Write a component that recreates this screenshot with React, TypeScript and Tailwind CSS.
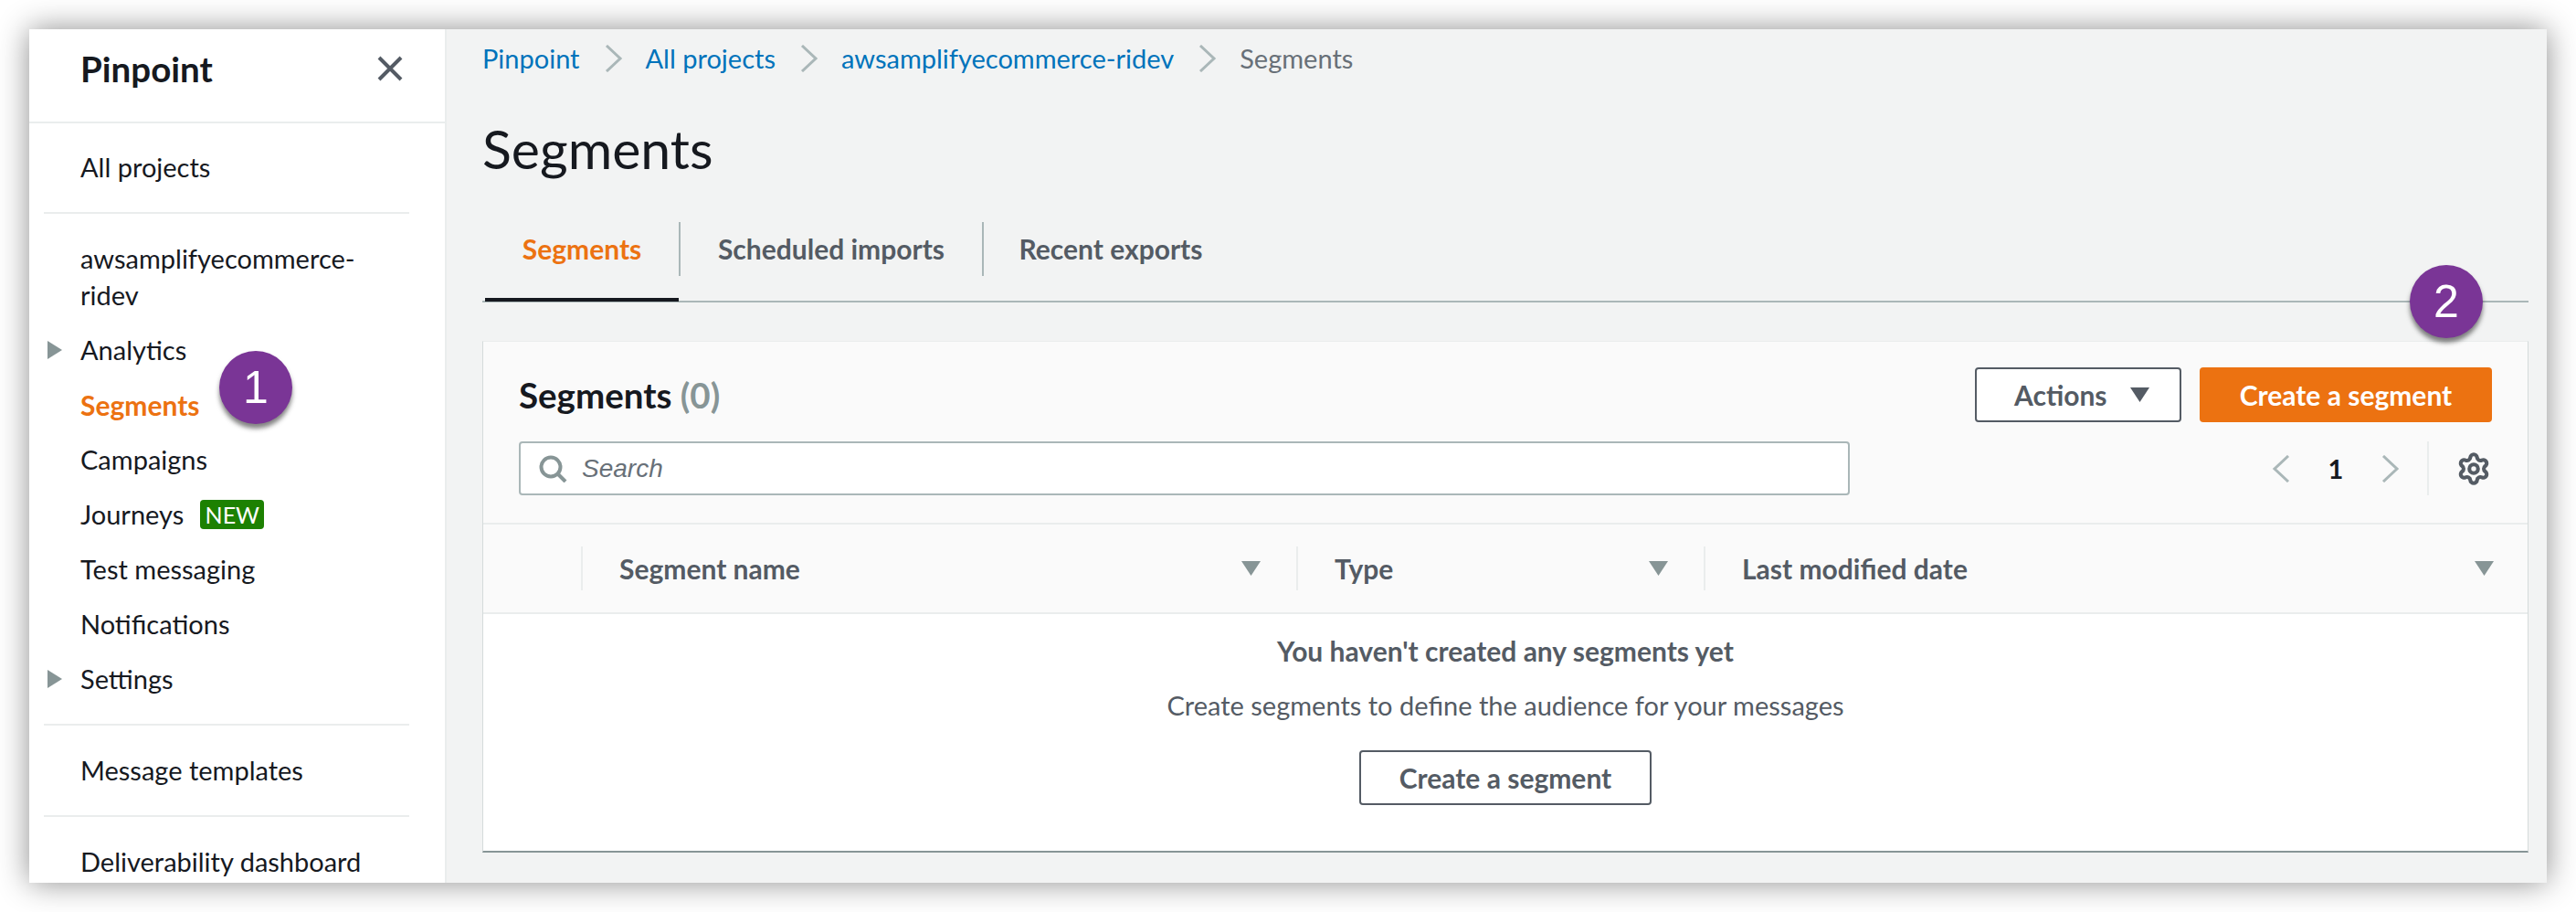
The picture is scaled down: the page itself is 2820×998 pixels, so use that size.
import { Settings } from "lucide-react";

function Caret({ className }: { className: string }) {
  return (
    <svg width="21" height="16" viewBox="0 0 21 16" className={className}>
      <path d="M0 0H21L10.5 16Z" fill="currentColor" />
    </svg>
  );
}

function Chevron({ left }: { left?: boolean }) {
  return (
    <svg width="20" height="30" viewBox="0 0 20 30" className="shrink-0 text-[#aab7b8]">
      <path d={left ? "M18 1 3 15 18 29" : "M2 1 17 15 2 29"} fill="none" stroke="currentColor" strokeWidth="3" />
    </svg>
  );
}

function NavItem({ label, arrow, active, children }: { label: string; arrow?: boolean; active?: boolean; children?: React.ReactNode }) {
  return (
    <div className={`flex h-[60px] items-center ${arrow ? "pl-[20px]" : "pl-[56px]"}`}>
      {arrow && (
        <svg width="16" height="20" viewBox="0 0 16 20" className="mr-[20px] text-[#879596]">
          <path d="M0 0 16 10 0 20Z" fill="currentColor" />
        </svg>
      )}
      <span className={active ? "text-[30px] font-bold text-[#ec7211]" : "text-[#16191f]"}>{label}</span>
      {children}
    </div>
  );
}

function Divider() {
  return <div className="mx-[16px] h-[2px] w-[400px] bg-[#eaeded]" />;
}

function Step({ n, className }: { n: number; className: string }) {
  return (
    <div className={`absolute flex h-[80px] w-[80px] items-center justify-center rounded-full bg-[#7a3596] font-['Liberation_Sans'] text-[50px] leading-none text-white shadow-[0_5px_5px_rgba(30,30,30,0.55)] ${className}`}>
      {n}
    </div>
  );
}

export default function App() {
  return (
    <div className="h-[998px] w-[2820px] bg-white p-[32px] font-[Lato,sans-serif] text-[29px] leading-[40px]">
      <div className="relative flex h-[934px] w-[2756px] overflow-visible bg-[#f2f3f3] shadow-[0_0_32px_rgba(0,0,0,0.45)]">
        <aside className="h-[934px] w-[457px] shrink-0 overflow-hidden border-r-2 border-[#eaeded] bg-white">
          <div className="flex h-[101px] items-center justify-between pl-[56px] pr-[46px]">
            <span className="pb-[16px] text-[38.5px] font-bold text-[#16191f]">Pinpoint</span>
            <svg width="28" height="28" viewBox="0 0 28 28" className="mb-[16px] text-[#545b64]">
              <path d="M2 2 26 26M26 2 2 26" stroke="currentColor" strokeWidth="4" fill="none" />
            </svg>
          </div>
          <div className="h-[2px] bg-[#eaeded]" />
          <div className="pt-[18px]">
            <NavItem label="All projects" />
          </div>
          <div className="pt-[19px]">
            <Divider />
          </div>
          <div className="pb-[10px] pl-[56px] pr-[40px] pt-[29px] text-[#16191f]">awsamplifyecommerce-<br />ridev</div>
          <NavItem label="Analytics" arrow />
          <NavItem label="Segments" active />
          <NavItem label="Campaigns" />
          <NavItem label="Journeys">
            <span className="ml-[18px] flex h-[32px] w-[70px] items-center justify-center rounded-[4px] bg-[#1d8102] text-[25px] text-white">NEW</span>
          </NavItem>
          <NavItem label="Test messaging" />
          <NavItem label="Notifications" />
          <NavItem label="Settings" arrow />
          <div className="pt-[19px]">
            <Divider />
          </div>
          <div className="pt-[19px]">
            <NavItem label="Message templates" />
          </div>
          <div className="pt-[19px]">
            <Divider />
          </div>
          <div className="pt-[19px]">
            <NavItem label="Deliverability dashboard" />
          </div>
        </aside>

        <main className="min-w-0 flex-1 pl-[39px] pr-[20px]">
          <nav className="flex h-[64px] items-center">
            <span className="text-[#0073bb]">Pinpoint</span>
            <span className="ml-[27px] mr-[25px]"><Chevron /></span>
            <span className="text-[#0073bb]">All projects</span>
            <span className="ml-[27px] mr-[25px]"><Chevron /></span>
            <span className="text-[#0073bb]">awsamplifyecommerce-ridev</span>
            <span className="ml-[27px] mr-[25px]"><Chevron /></span>
            <span className="text-[#687078]">Segments</span>
          </nav>
          <h1 className="mt-[33px] text-[59px] font-normal leading-[68px] text-[#16191f]">Segments</h1>

          <div className="mt-[46px] flex h-[88px] items-start border-b-2 border-[#aab7b8] pl-[3px] text-[30px] font-bold">
            <div className="flex h-[87px] w-[212px] items-start justify-center border-b-4 border-[#16191f]">
              <span className="flex h-[57px] items-center text-[#ec7211]">Segments</span>
            </div>
            <div className="flex h-[59px] w-[332px] items-center justify-center border-l-2 border-[#aab7b8] pb-[2px] text-[#545b64]">Scheduled imports</div>
            <div className="flex h-[59px] w-[280px] items-center justify-center border-l-2 border-[#aab7b8] pb-[2px] text-[#545b64]">Recent exports</div>
          </div>

          <section className="mt-[42px] h-[560px] border-x border-b-2 border-t border-[#d5dbdb] border-b-[#879596] border-t-[#eaeded] bg-white">
            <div className="h-[200px] border-b-2 border-[#eaeded] bg-[#fafafa] px-[39px] pt-[28px]">
              <div className="flex h-[60px] items-center justify-between">
                <div className="text-[38.5px] font-bold text-[#16191f]">Segments <span className="text-[#879596]">(0)</span></div>
                <div className="flex gap-[20px] text-[30px] font-bold">
                  <button className="flex h-[60px] w-[226px] items-center rounded-[4px] border-2 border-[#545b64] bg-white pl-[41px] text-[#545b64]">
                    Actions
                    <Caret className="ml-[25px] text-[#545b64]" />
                  </button>
                  <button className="h-[60px] w-[320px] rounded-[4px] bg-[#ec7211] text-white">Create a segment</button>
                </div>
              </div>
              <div className="mt-[21px] flex h-[59px] items-center justify-between">
                <div className="flex h-[59px] w-[1457px] items-center rounded-[4px] border-2 border-[#aab7b8] bg-white pl-[20px]">
                  <svg width="32" height="30" viewBox="0 0 32 30" className="shrink-0 text-[#879596]">
                    <circle cx="13" cy="13" r="10.5" fill="none" stroke="currentColor" strokeWidth="4" />
                    <path d="M21 21 29 29" stroke="currentColor" strokeWidth="4" />
                  </svg>
                  <span className="ml-[15px] font-['Liberation_Sans'] text-[28px] italic text-[#687078]">Search</span>
                </div>
                <div className="flex h-[59px] items-center">
                  <Chevron left />
                  <span className="mx-[40px] w-[20px] text-center font-bold text-[#16191f]">1</span>
                  <Chevron />
                  <div className="ml-[30px] h-[59px] w-[2px] bg-[#eaeded]" />
                  <Settings size={38} strokeWidth={2.6} className="ml-[30px] mr-[1px] text-[#545b64]" />
                </div>
              </div>
            </div>

            <div className="flex h-[98px] items-center border-b-2 border-[#eaeded] bg-[#fafafa] text-[30px] font-bold text-[#545b64]">
              <div className="w-[107px]" />
              <div className="flex h-[48px] w-[783px] items-center justify-between border-l-2 border-[#eaeded] pl-[40px] pr-[39px]">
                Segment name <Caret className="text-[#879596]" />
              </div>
              <div className="flex h-[48px] w-[446px] items-center justify-between border-l-2 border-[#eaeded] pl-[40px] pr-[39px]">
                Type <Caret className="text-[#879596]" />
              </div>
              <div className="flex h-[48px] flex-1 items-center justify-between border-l-2 border-[#eaeded] pl-[40px] pr-[37px]">
                Last modified date <Caret className="text-[#879596]" />
              </div>
            </div>

            <div className="flex flex-col items-center pt-[20px] text-[#545b64]">
              <div className="text-[30px] font-bold">You haven't created any segments yet</div>
              <div className="mt-[20px]">Create segments to define the audience for your messages</div>
              <button className="mt-[29px] h-[60px] w-[320px] rounded-[4px] border-2 border-[#545b64] bg-white text-[30px] font-bold text-[#545b64]">Create a segment</button>
            </div>
          </section>
        </main>

        <Step n={1} className="left-[208px] top-[352px]" />
        <Step n={2} className="left-[2606px] top-[258px]" />
      </div>
    </div>
  );
}
